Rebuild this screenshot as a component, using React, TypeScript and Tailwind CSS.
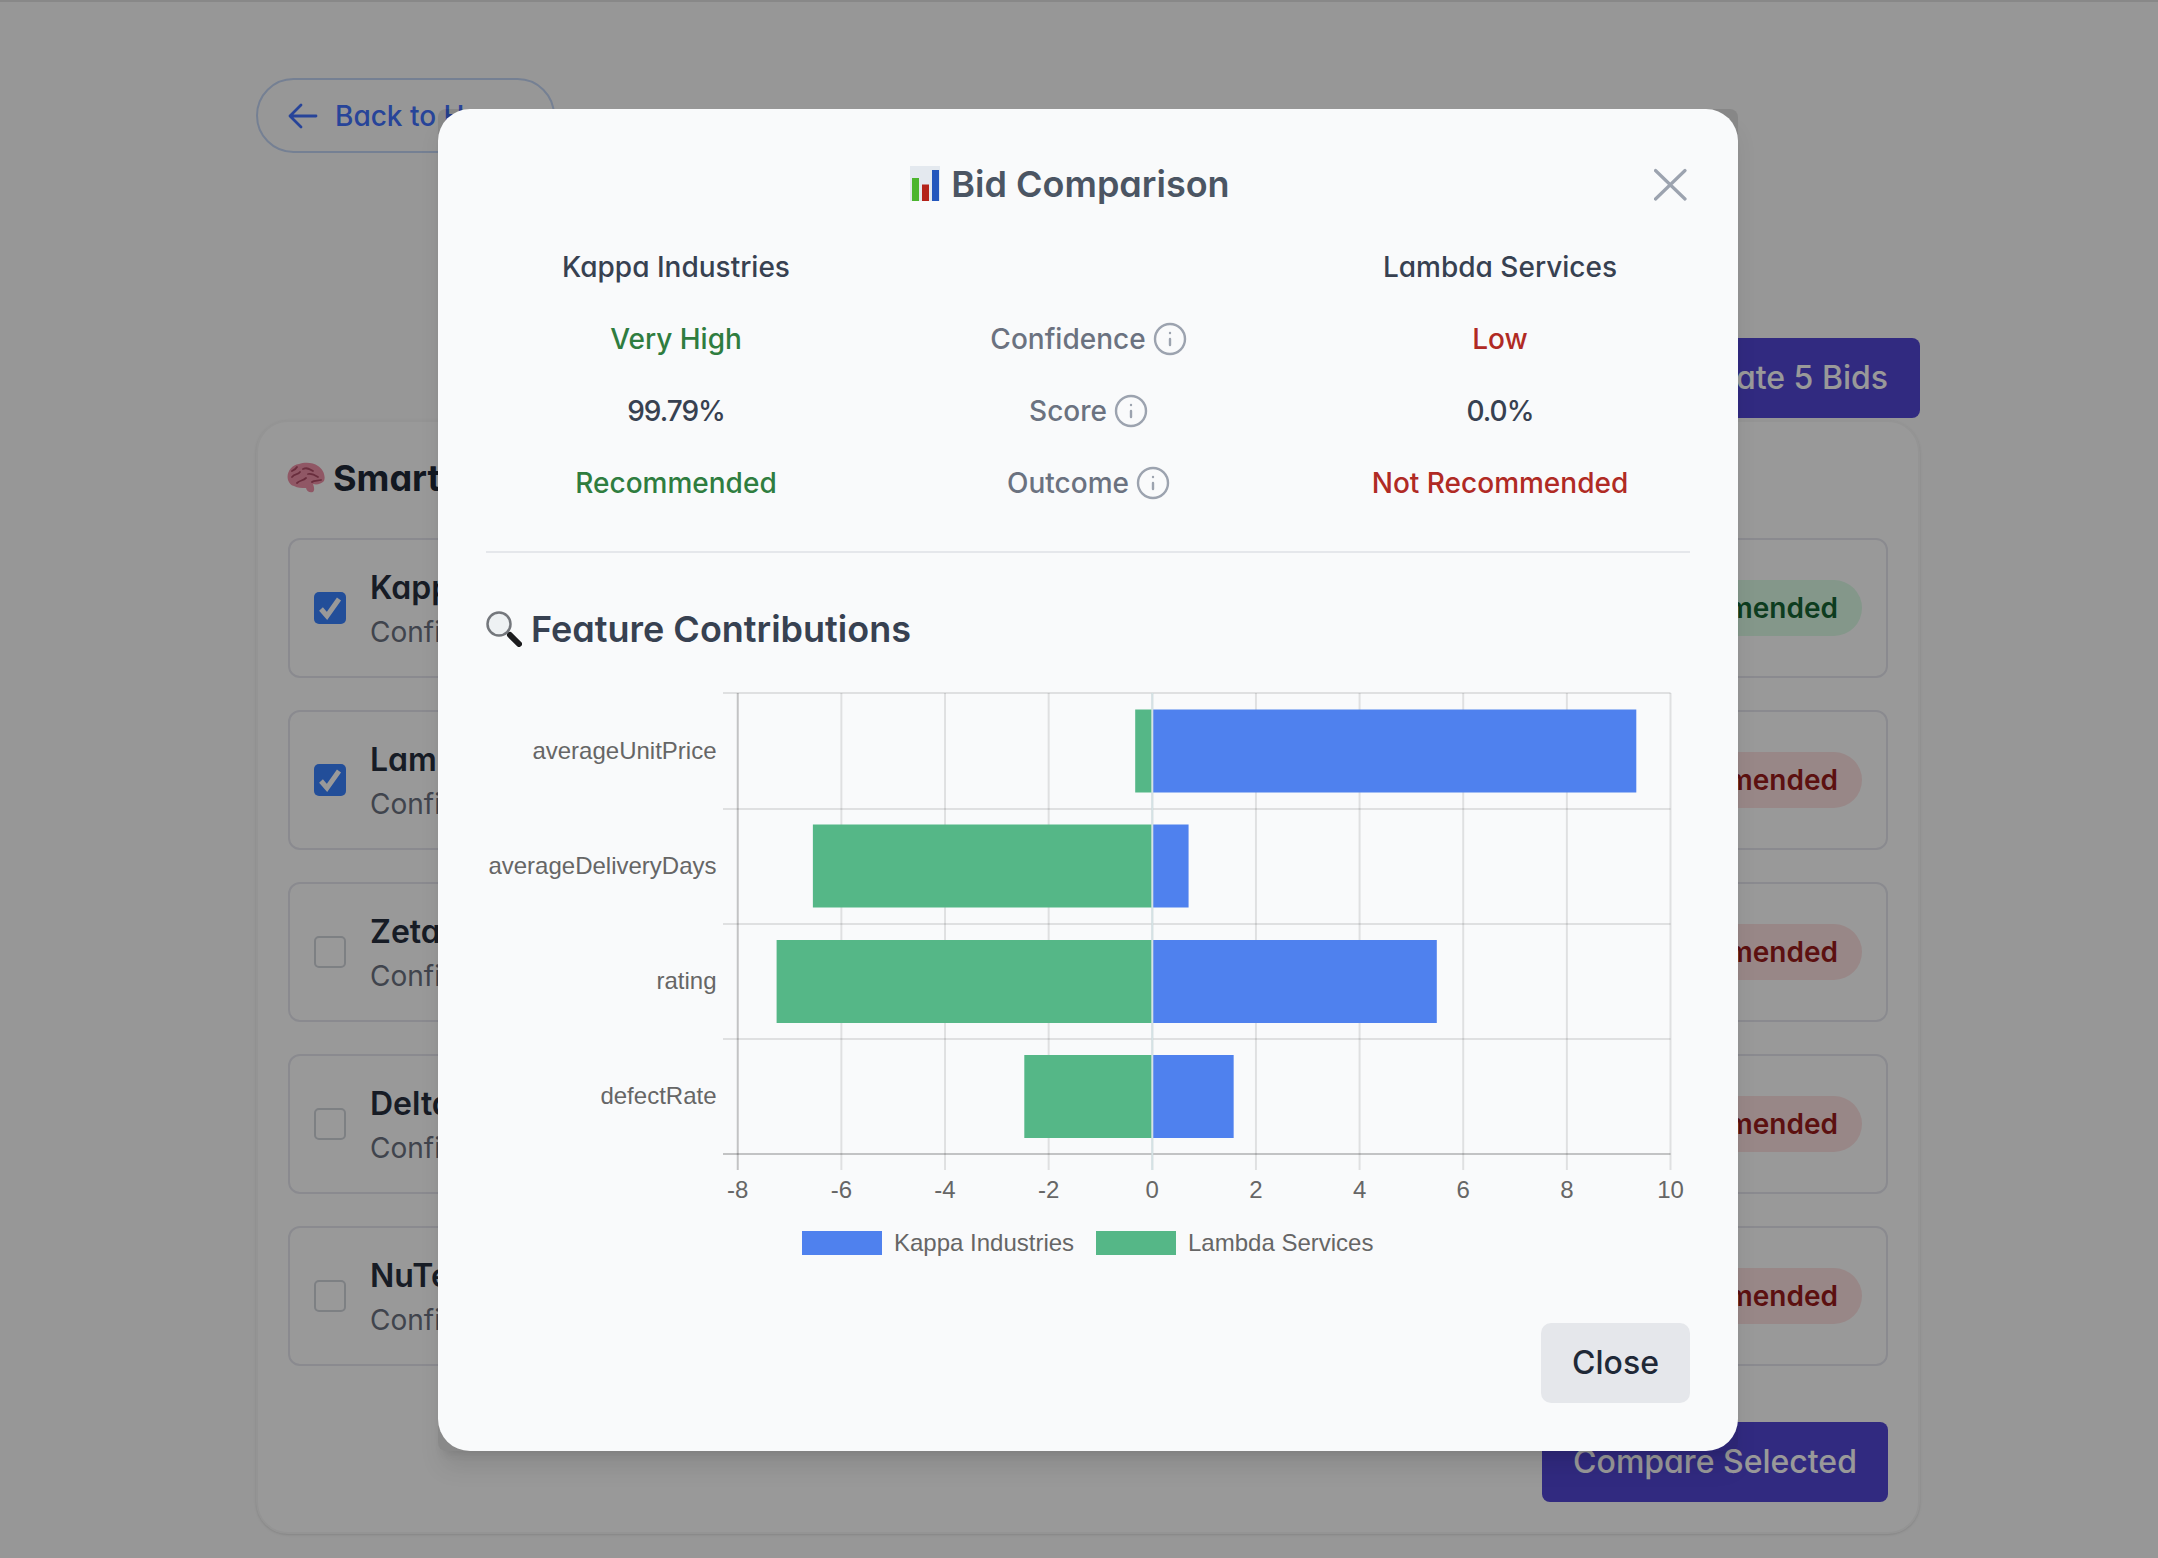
import React from "react";
import { Info } from "lucide-react";

const font = "font-['Inter','Noto_Sans',sans-serif] [font-feature-settings:'cv11']";

function Brain() {
  return (
    <svg width="38" height="32" viewBox="0 0 38 32" className="shrink-0">
      <path d="M1 18C-1 11 4 3 12 2c5-2 14-2 19 2 5 3 8 10 6 15-3 3-7 4-11 3 1 3 2 6 0 8-3 1-6 0-7-4-5 0-8 0-12-2-2 0-5-3-6-6z" fill="#f092a8" />
      <path d="M5 15c3-4 6-2 8-5M10 21c3-3 6-2 9-5M16 7c4-2 7 0 10 2M21 12c4-1 7 1 10 3M25 20c2-2 6-1 9-2M5 9c2-1 4-2 5-4" stroke="#b04c66" strokeWidth="1.8" fill="none" strokeLinecap="round" />
    </svg>
  );
}

function ChartEmoji() {
  return (
    <svg width="30" height="35" viewBox="0 0 30 35" className="shrink-0">
      <rect width="30" height="35" fill="#e4e9ef" />
      <rect x="2" y="12" width="7" height="23" fill="#4cb52f" />
      <rect x="12" y="18.5" width="7" height="16.5" fill="#b4231a" />
      <rect x="22" y="4" width="7" height="31" fill="#2457bd" />
    </svg>
  );
}

function Magnifier() {
  return (
    <svg width="36" height="36" viewBox="0 0 36 36" className="shrink-0">
      <line x1="21" y1="21" x2="24" y2="24" stroke="#8d8d8d" strokeWidth="3" />
      <line x1="24" y1="24" x2="33" y2="33" stroke="#1c1c1e" strokeWidth="6" strokeLinecap="round" />
      <circle cx="13" cy="13" r="11.5" fill="#eef1f3" stroke="#74777c" strokeWidth="2.5" />
    </svg>
  );
}

function Check() {
  return (
    <span className="flex h-8 w-8 shrink-0 items-center justify-center rounded-[5px] bg-[#3a82ff]">
      <svg width="28" height="28" viewBox="0 0 28 28">
        <path d="M5 15l6 7L23 5" stroke="#fff" strokeWidth="5" fill="none" />
      </svg>
    </span>
  );
}

const rows = [
  { name: "Kappa Industries", checked: true, ok: true, conf: "Very High" },
  { name: "Lambda Services", checked: true, ok: false, conf: "Low" },
  { name: "Zeta Supplies", checked: false, ok: false, conf: "Low" },
  { name: "Delta Corp", checked: false, ok: false, conf: "Low" },
  { name: "NuTech Systems", checked: false, ok: false, conf: "Low" },
];

function Row({ r }: { r: (typeof rows)[number] }) {
  return (
    <div className="flex h-[140px] items-center justify-between rounded-xl border-2 border-[#e6e7ef] pl-6 pr-6">
      <div className="flex items-center gap-6">
        {r.checked ? <Check /> : <span className="h-8 w-8 shrink-0 rounded-[5px] border-2 border-[#d1d5db]" />}
        <div className="pt-[4px]">
          <div className="text-[32px] leading-[44px] font-semibold text-[#27303f]">{r.name}</div>
          <div className="text-[28px] leading-[44px] text-[#6b7280]">Confidence: {r.conf}</div>
        </div>
      </div>
      <span
        className={
          r.ok
            ? "flex h-14 items-center rounded-full bg-[#dcfce7] px-6 text-[28px] font-semibold text-[#166534]"
            : "flex h-14 items-center rounded-full bg-[#fee2e2] px-6 text-[28px] font-semibold text-[#991b1b]"
        }
      >
        {r.ok ? "Recommended" : "Not Recommended"}
      </span>
    </div>
  );
}

const X = (v: number) => 666.3 + 51.82 * v;
const gridY = [20, 136, 251, 366, 481];
const ticks = [-8, -6, -4, -2, 0, 2, 4, 6, 8, 10];
const data = [
  { label: "averageUnitPrice", a: 9.34, b: -0.33, y: 36.5 },
  { label: "averageDeliveryDays", a: 0.7, b: -6.55, y: 151.5 },
  { label: "rating", a: 5.49, b: -7.25, y: 267 },
  { label: "defectRate", a: 1.57, b: -2.47, y: 382 },
];

function Chart() {
  return (
    <svg width="1204" height="600" viewBox="0 0 1204 600" className="mt-4 block">
      <g fontFamily="'Liberation Sans', Arial, sans-serif" fontSize="24" fill="#666666">
        {ticks.map((t) => (
          <line key={t} x1={X(t)} x2={X(t)} y1={20} y2={497} stroke={t === -8 ? "rgba(0,0,0,0.22)" : "rgba(0,0,0,0.1)"} strokeWidth="2" />
        ))}
        {gridY.map((y, i) => (
          <line key={y} x1={237} x2={X(10)} y1={y} y2={y} stroke={i === 4 ? "rgba(0,0,0,0.22)" : "rgba(0,0,0,0.1)"} strokeWidth="2" />
        ))}
        {data.map((d) => (
          <g key={d.label}>
            <rect x={X(d.b)} y={d.y} width={X(0) - X(d.b)} height={83} fill="#55b787" />
            <rect x={X(0)} y={d.y} width={X(d.a) - X(0)} height={83} fill="#4f81ee" />
            <text x={230.5} y={d.y + 49} textAnchor="end">{d.label}</text>
          </g>
        ))}
        <line x1={X(0)} x2={X(0)} y1={20} y2={497} stroke="#d4e2e4" strokeWidth="2" />
        {ticks.map((t) => (
          <text key={t} x={X(t)} y={525} textAnchor="middle">{t}</text>
        ))}
        <rect x={316} y={558} width={80} height={24} fill="#4f81ee" />
        <text x={408} y={578}>Kappa Industries</text>
        <rect x={610} y={558} width={80} height={24} fill="#55b787" />
        <text x={702} y={578}>Lambda Services</text>
      </g>
    </svg>
  );
}

function Label({ text }: { text: string }) {
  return (
    <div className="flex h-10 items-center justify-center gap-[6px] pl-[2px] text-[28px] font-medium text-[#6b7280]">
      {text}
      <Info size={36} strokeWidth={1.6} className="text-[#9ca3af]" />
    </div>
  );
}

function Cell({ text, cls }: { text: string; cls: string }) {
  return <div className={"flex h-10 items-center justify-center text-[28px] font-medium " + cls}>{text}</div>;
}

export default function App() {
  return (
    <div className={"relative h-[1558px] w-full overflow-hidden border-t-2 border-[#888] bg-[#fcfcfc] " + font}>
      <div className="ml-[256px] w-[1664px] pt-[76px]">
        <div className="flex h-[75px] w-[299px] items-center gap-[17px] rounded-full border-2 border-[#c3d5f5] pl-[30px] text-[28px] font-medium text-[#4272ff]">
          <svg width="30" height="26" viewBox="0 0 30 26" className="shrink-0">
            <path d="M28 13H2M13 2L2 13l11 11" stroke="#4272ff" strokeWidth="2.8" fill="none" strokeLinecap="round" strokeLinejoin="round" />
          </svg>
          Back to Home
        </div>
        <div className="mt-[185px] flex justify-end">
          <button className="flex h-20 items-center rounded-lg bg-[#5246d5] px-8 text-[32px] font-medium text-white">Evaluate 5 Bids</button>
        </div>
        <div className="mt-[2px] h-[1114px] rounded-[32px] border-2 border-[#f7f7f7] bg-white px-[30px] pt-[28px] shadow-sm">
          <div className="flex h-14 items-center gap-[8px] -ml-px">
            <Brain />
            <h2 className="text-[36px] font-bold text-[#1f2937]">Smart Recommendations</h2>
          </div>
          <div className="mt-8 flex flex-col gap-8">
            {rows.map((r) => (
              <Row key={r.name} r={r} />
            ))}
          </div>
          <div className="mt-14 flex justify-end">
            <button className="flex h-20 w-[346px] items-center justify-center rounded-lg bg-[#5246d5] text-[32px] font-medium text-white">Compare Selected</button>
          </div>
        </div>
      </div>

      <div className="absolute inset-x-0 -top-px bottom-0 flex items-center justify-center bg-black/40 pl-[18px]">
        <div className="w-[1300px] rounded-lg bg-black/10 shadow-xl">
          <div className="rounded-[32px] bg-[#f9fafb] px-12 pb-[48px] pt-[47px]">
            <div className="flex h-14 items-center">
              <div className="flex flex-1 items-center justify-center gap-[11px] text-[36px] font-semibold text-[#4b5563]">
                <ChartEmoji />
                Bid Comparison
              </div>
              <svg width="36" height="36" viewBox="0 0 36 36" className="shrink-0">
                <path d="M1.5 4.5L31 33M31 4.5L1.5 33" stroke="#9ca3af" strokeWidth="3.2" strokeLinecap="round" />
              </svg>
            </div>
            <div className="mt-[35px] grid grid-cols-3 gap-x-8 gap-y-8">
              <Cell text="Kappa Industries" cls="text-[#374151]" />
              <div />
              <Cell text="Lambda Services" cls="text-[#374151]" />
              <Cell text="Very High" cls="text-[#2f7d3f]" />
              <Label text="Confidence" />
              <Cell text="Low" cls="text-[#b02a24]" />
              <Cell text="99.79%" cls="tracking-[-1px] text-[#374151]" />
              <Label text="Score" />
              <Cell text="0.0%" cls="tracking-[-1px] text-[#374151]" />
              <Cell text="Recommended" cls="text-[#2f7d3f]" />
              <Label text="Outcome" />
              <Cell text="Not Recommended" cls="text-[#b02a24]" />
            </div>
            <div className="mt-12 border-t-2 border-[#e5e7eb]" />
            <div className="mt-12 flex h-14 items-center gap-[9px] text-[36px] font-semibold text-[#374151]">
              <Magnifier />
              Feature Contributions
            </div>
            <Chart />
            <div className="mt-[50px] flex justify-end">
              <button className="flex h-20 w-[149px] items-center justify-center rounded-[10px] bg-[#e5e7eb] text-[32px] font-medium text-[#1f2937]">Close</button>
            </div>
          </div>
        </div>
      </div>
    </div>
  );
}
